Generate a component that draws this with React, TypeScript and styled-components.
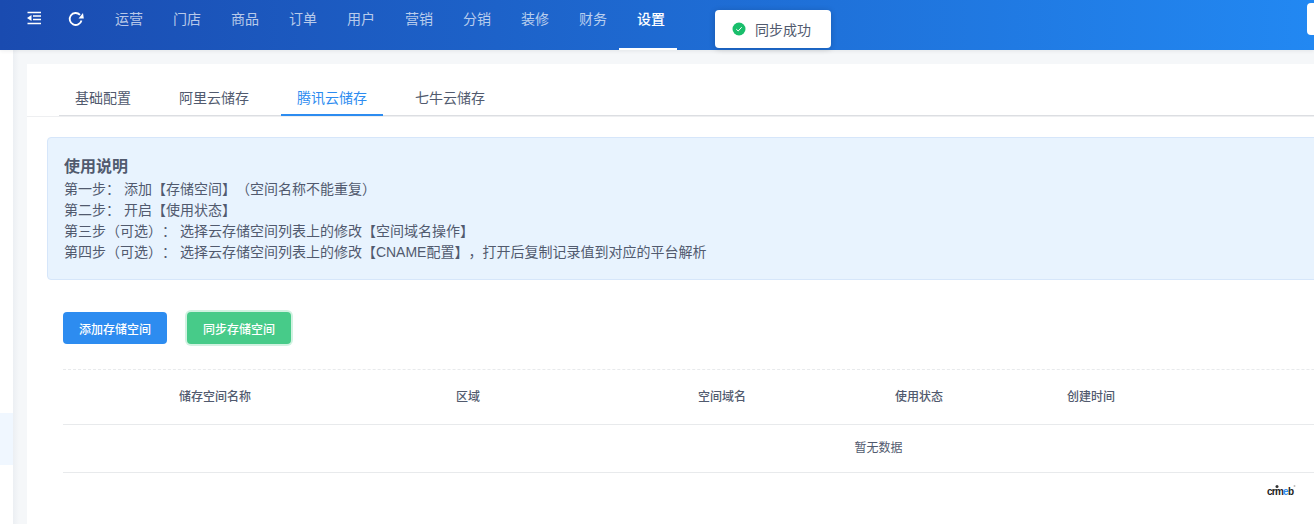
import { createGlobalStyle, styled } from "styled-components";

const navItems = ["运营", "门店", "商品", "订单", "用户", "营销", "分销", "装修", "财务", "设置"];
const tabs = ["基础配置", "阿里云储存", "腾讯云储存", "七牛云储存"];
const steps = [
  "第一步： 添加【存储空间】（空间名称不能重复）",
  "第二步： 开启【使用状态】",
  "第三步（可选）： 选择云存储空间列表上的修改【空间域名操作】",
  "第四步（可选）： 选择云存储空间列表上的修改【CNAME配置】，打开后复制记录值到对应的平台解析",
];
const columns = ["", "储存空间名称", "区域", "空间域名", "使用状态", "创建时间", ""];

const GlobalStyle = createGlobalStyle`
  html, body {
    margin: 0;
    height: 100%;
    overflow: hidden;
    background: #fff;
  }
  body {
    font-family: "Liberation Sans", "Noto Sans CJK SC", sans-serif;
    font-size: 14px;
    color: #515a6e;
    text-spacing-trim: space-all;
  }
  * {
    box-sizing: border-box;
  }
`;

export default function App() {
  return (
    <Page>
      <GlobalStyle />
      <Header>
        <IconSlot $width={42}>
          <svg width="16" height="14" viewBox="0 0 16 14" fill="none">
            <path d="M1.500 1.500H15M7 5H15M7 8.500H15M1.500 12.500H15" stroke="#fff" strokeWidth="1.600" />
            <path d="M5.500 4V10L1 7Z" fill="#fff" />
          </svg>
        </IconSlot>
        <IconSlot $width={29}>
          <svg width="17" height="16" viewBox="0 0 17 16" fill="none">
            <path d="M13.500 9.500A6 6 0 1 1 12 3.800" stroke="#fff" strokeWidth="1.800" />
            <path d="M10.500 7.500L15.800 7.500L15 2Z" fill="#fff" />
          </svg>
        </IconSlot>
        <Nav>
          {navItems.map((item) => (
            <NavItem key={item} $active={item === "设置"}>
              {item}
            </NavItem>
          ))}
        </Nav>
        <HeaderEdge />
      </Header>
      <Body>
        <Sidebar>
          <SideActive />
        </Sidebar>
        <Main>
          <Card>
            <TabWrap>
              <TabBar>
                {tabs.map((tab) => (
                  <Tab key={tab} $active={tab === "腾讯云储存"}>
                    {tab}
                  </Tab>
                ))}
              </TabBar>
            </TabWrap>
            <Notice>
              <NoticeTitle>使用说明</NoticeTitle>
              {steps.map((step) => (
                <NoticeLine key={step}>{step}</NoticeLine>
              ))}
            </Notice>
            <Actions>
              <Button>添加存储空间</Button>
              <Button $green>同步存储空间</Button>
            </Actions>
            <Table>
              <HeadRow>
                {columns.map((col, i) => (
                  <HeadCell key={i}>{col}</HeadCell>
                ))}
              </HeadRow>
              <EmptyRow>暂无数据</EmptyRow>
            </Table>
            <Brand>
              <svg width="30" height="14" viewBox="0 0 30 14">
                <text
                  x="1"
                  y="12"
                  fontFamily="Liberation Sans, sans-serif"
                  fontSize="10"
                  fontWeight="700"
                  textLength="27"
                  fill="#222"
                >
                  crm<tspan fill="#2d8cf0">e</tspan>b
                </text>
                <circle cx="11" cy="3.500" r="1.500" fill="#333" />
                <circle cx="28.500" cy="3" r="1" fill="#bbb" />
              </svg>
            </Brand>
          </Card>
        </Main>
      </Body>
      <Toast>
        <svg width="14" height="14" viewBox="0 0 14 14">
          <circle cx="7" cy="7" r="6.500" fill="#19be6b" />
          <path d="M4.300 7.200L6.200 9L9.700 5.200" fill="none" stroke="#fff" strokeWidth="1" />
        </svg>
        同步成功
      </Toast>
    </Page>
  );
}

const Page = styled.div`
  position: relative;
  display: flex;
  flex-direction: column;
  width: 1314px;
  height: 524px;
  overflow: hidden;
`;

const Header = styled.header`
  position: relative;
  z-index: 2;
  display: flex;
  flex: none;
  height: 50px;
  padding-left: 26px;
  background: linear-gradient(90deg, #1a4bb0 0%, #2288f2 100%);
  box-shadow: 0 1px 4px rgba(0, 21, 41, 0.08);
`;

const IconSlot = styled.div<{ $width: number }>`
  flex: none;
  width: ${(p) => p.$width}px;
  padding-top: 11px;
`;

const Nav = styled.nav`
  display: flex;
`;

const NavItem = styled.div<{ $active?: boolean }>`
  width: 58px;
  height: 50px;
  padding-left: 18px;
  line-height: 38px;
  color: ${(p) => (p.$active ? "#fff" : "rgba(255, 255, 255, 0.7)")};
  font-weight: ${(p) => (p.$active ? 500 : 400)};
  border-bottom: 2px solid ${(p) => (p.$active ? "#fff" : "transparent")};
`;

const HeaderEdge = styled.div`
  width: 7px;
  height: 32px;
  margin: 3px 0 0 auto;
  background: #fff;
  border-radius: 4px 0 0 4px;
`;

const Body = styled.div`
  display: flex;
  flex: 1;
  min-height: 0;
`;

const Sidebar = styled.aside`
  flex: none;
  width: 13px;
  padding-top: 363px;
  background: #fff;
`;

const SideActive = styled.div`
  height: 52px;
  background: #f0f7ff;
`;

const Main = styled.main`
  flex: 1;
  min-width: 0;
  padding: 14px 0 0 14px;
  background: linear-gradient(90deg, #eceff3 0, #f5f7f9 6px);
  overflow: hidden;
`;

const Card = styled.div`
  width: 1704px;
  height: 100%;
  background: #fff;
`;

const TabWrap = styled.div`
  height: 53px;
  border-bottom: 1px solid #eeeff1;
`;

const TabBar = styled.div`
  display: flex;
  gap: 16px;
  height: 52px;
  margin-left: 32px;
  padding-top: 17px;
  border-bottom: 1px solid #dcdee2;
`;

const Tab = styled.div<{ $active?: boolean }>`
  height: 35px;
  padding: 0 16px;
  line-height: 34px;
  color: ${(p) => (p.$active ? "#2d8cf0" : "#515a6e")};
  border-bottom: 2px solid ${(p) => (p.$active ? "#2d8cf0" : "transparent")};
`;

const Notice = styled.div`
  height: 143px;
  margin: 20px 20px 0;
  padding: 18px 16px 0;
  background: #e8f3fe;
  border: 1px solid #d6e6fa;
  border-radius: 4px;
`;

const NoticeTitle = styled.div`
  margin-bottom: 2px;
  font-size: 16px;
  font-weight: 700;
  line-height: 21px;
`;

const NoticeLine = styled.div`
  line-height: 21px;
  white-space: pre;
`;

const Actions = styled.div`
  display: flex;
  gap: 20px;
  margin: 32px 0 0 36px;
`;

const Button = styled.button<{ $green?: boolean }>`
  width: 104px;
  height: 32px;
  padding: 0;
  border: 0;
  border-radius: 4px;
  font: inherit;
  font-size: 12px;
  font-weight: 500;
  color: #fff;
  background: ${(p) => (p.$green ? "#47cb89" : "#2d8cf0")};
  box-shadow: ${(p) => (p.$green ? "0 0 0 2px rgba(25, 190, 107, 0.2)" : "none")};
`;

const Table = styled.div`
  margin: 25px 37px 0 36px;
  border-top: 1px dashed #e8eaec;
`;

const HeadRow = styled.div`
  display: grid;
  grid-template-columns: 100px 277px 242px 197px 172px 172px 1fr;
  height: 55px;
  border-bottom: 1px solid #e8eaec;
`;

const HeadCell = styled.div`
  padding-left: 16px;
  font-size: 12px;
  font-weight: 500;
  line-height: 54px;
`;

const EmptyRow = styled.div`
  height: 48px;
  font-size: 12px;
  line-height: 47px;
  text-align: center;
  border-bottom: 1px solid #e8eaec;
`;

const Brand = styled.div`
  display: flex;
  justify-content: flex-end;
  width: 1269px;
  padding-top: 10px;
`;

const Toast = styled.div`
  position: absolute;
  top: 10px;
  left: 715px;
  z-index: 5;
  display: flex;
  align-items: center;
  gap: 9px;
  width: 116px;
  height: 38px;
  padding-left: 17px;
  background: #fff;
  border-radius: 4px;
  box-shadow: 0 1px 6px rgba(0, 0, 0, 0.2);
`;
